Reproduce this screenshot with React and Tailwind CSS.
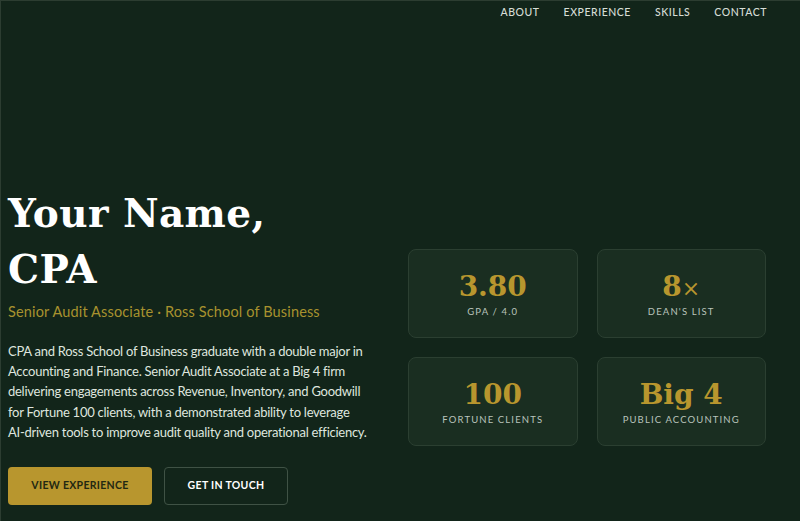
const NAV = ['About', 'Experience', 'Skills', 'Contact'];

const STATS = [
    { value: '3.80', label: 'GPA / 4.0' },
    { value: '8', suffix: '×', label: "Dean's List" },
    { value: '100', label: 'Fortune Clients' },
    { value: 'Big 4', label: 'Public Accounting' },
];

const serif = { fontFamily: '"DejaVu Serif", "Liberation Serif", serif' };

export default function App() {
    return (
        <div
            className="flex h-[521px] w-[800px] flex-col overflow-hidden border-l border-t border-[#2c3d31] bg-[#12251a] text-white"
            style={{ fontFamily: 'Lato, "Open Sans", sans-serif' }}
        >
            {/* Nav */}
            <nav className="flex h-[24px] items-center justify-end gap-6 pr-[33px]">
                {NAV.map((n) => (
                    <a key={n} className="text-[10.5px] font-medium uppercase tracking-[0.05em] text-[#d6ddd6]">
                        {n}
                    </a>
                ))}
            </nav>

            {/* Hero */}
            <div className="flex flex-1 items-center pb-[8px] pl-[7px] pr-[34px] pt-[156px]">
                <div className="w-[372px] pb-[4px]">
                    <h1 className="text-[39px] font-bold leading-[56px] tracking-[0.01em] text-white" style={serif}>
                        Your Name,
                        <br />
                        CPA
                    </h1>
                    <p className="mt-[4px] text-[14.5px] tracking-[0.01em] text-[#a8922e]">
                        Senior Audit Associate · Ross School of Business
                    </p>
                    <p className="mt-[18px] whitespace-nowrap text-[13px] leading-[20.3px] tracking-[-0.02em] text-[#dfe5df]">
                        CPA and Ross School of Business graduate with a double major in
                        <br />
                        Accounting and Finance. Senior Audit Associate at a Big 4 firm
                        <br />
                        delivering engagements across Revenue, Inventory, and Goodwill
                        <br />
                        for Fortune 100 clients, with a demonstrated ability to leverage
                        <br />
                        AI-driven tools to improve audit quality and operational efficiency.
                    </p>
                    <div className="mt-[25px] flex gap-3">
                        <button className="h-[38px] w-[144px] rounded-[4px] bg-[#b8962e] text-[10.5px] font-bold uppercase tracking-[0.03em] text-[#232812]">
                            View Experience
                        </button>
                        <button className="h-[38px] w-[124px] rounded-[4px] border border-[#3f5245] text-[10.5px] font-bold uppercase tracking-[0.03em] text-white">
                            Get in Touch
                        </button>
                    </div>
                </div>

                <div className="ml-auto grid w-[358px] grid-cols-2 gap-[19px]">
                    {STATS.map((s) => (
                        <div
                            key={s.label}
                            className="flex h-[89px] flex-col items-center justify-center rounded-[8px] border border-[#2b3f31] bg-[#1a2e21] pt-[6px]"
                        >
                            <div className="text-[28px] font-bold leading-none text-[#b8962e]" style={serif}>
                                {s.value}
                                {s.suffix && <span className="text-[22px] font-normal">{s.suffix}</span>}
                            </div>
                            <div className="mt-[4px] text-[9.5px] uppercase tracking-[0.12em] text-[#b9c4bc]">
                                {s.label}
                            </div>
                        </div>
                    ))}
                </div>
            </div>
        </div>
    );
}
